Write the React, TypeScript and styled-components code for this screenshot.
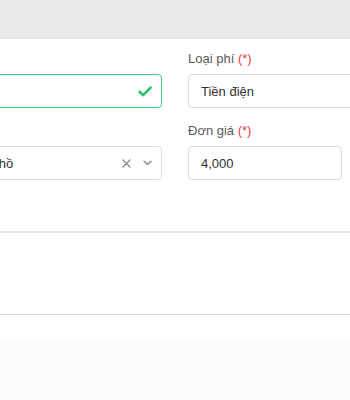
import * as React from 'react';
import styled, { createGlobalStyle } from 'styled-components';

const GlobalStyle = createGlobalStyle`
  html, body {
    margin: 0;
    padding: 0;
    overflow: hidden;
    background: #ffffff;
  }
  body {
    font-family: "Liberation Sans", Arial, sans-serif;
  }
`;

const Page = styled.div`
  width: 350px;
  height: 400px;
  display: flex;
  flex-direction: column;
  overflow: hidden;
`;

const TopBar = styled.div`
  height: 39px;
  flex-shrink: 0;
  background: #e9e9eb;
`;

const Form = styled.div`
  display: flex;
  flex-direction: column;
  gap: 13px;
  margin-left: -80px;
  padding-top: 10px;
`;

const Row = styled.div`
  display: flex;
  gap: 26px;
`;

const Field = styled.div<{ $width: number }>`
  width: ${({ $width }) => $width}px;
  flex-shrink: 0;
  display: flex;
  flex-direction: column;
  gap: 5px;
`;

const Label = styled.label`
  height: 20px;
  line-height: 20px;
  font-size: 13px;
  color: #595959;
  white-space: nowrap;
`;

const Required = styled.span`
  color: #ef3b3b;
`;

const InputBox = styled.div<{ $valid?: boolean }>`
  height: 34px;
  box-sizing: border-box;
  border: 1px solid ${({ $valid }) => ($valid ? '#46c77a' : '#dcdce1')};
  border-radius: 4px;
  display: flex;
  align-items: center;
  padding: 0 9px 0 12px;
  font-size: 13px;
  color: #333333;
  background: #fff;
`;

const Value = styled.span`
  flex: 1;
  white-space: nowrap;
  overflow: hidden;
`;

const Icons = styled.span`
  display: flex;
  align-items: center;
  gap: 12px;
  color: #8a8a8f;
`;

const Divider = styled.div<{ $color: string; $size: number }>`
  height: ${({ $size }) => $size}px;
  background: ${({ $color }) => $color};
  flex-shrink: 0;
`;

const Gap = styled.div<{ $h: number }>`
  height: ${({ $h }) => $h}px;
  flex-shrink: 0;
`;

const Footer = styled.div`
  flex: 1;
  background: #fcfcfd;
`;

const Check = () => (
  <svg width="14" height="11" viewBox="0 0 14 11">
    <path d="M1.5 5.8 L5.2 9.2 L12.6 1.6" fill="none" stroke="#2fbf66" strokeWidth="2.6" strokeLinecap="round" strokeLinejoin="round" />
  </svg>
);

const Cross = () => (
  <svg width="9" height="9" viewBox="0 0 9 9">
    <path d="M1 1 L8 8 M8 1 L1 8" stroke="#8a8a8f" strokeWidth="1.4" strokeLinecap="round" />
  </svg>
);

const Chevron = () => (
  <svg width="9" height="6" viewBox="0 0 9 6">
    <path d="M1 1.2 L4.5 4.6 L8 1.2" fill="none" stroke="#8a8a8f" strokeWidth="1.4" strokeLinecap="round" strokeLinejoin="round" />
  </svg>
);

const App: React.FunctionComponent = () => {
  return (
    <Page>
      <GlobalStyle />
      <TopBar />
      <Form>
        <Row>
          <Field $width={242}>
            <Label />
            <InputBox $valid>
              <Value />
              <Icons>
                <Check />
              </Icons>
            </InputBox>
          </Field>
          <Field $width={240}>
            <Label>
              Loại phí <Required>(*)</Required>
            </Label>
            <InputBox>
              <Value>Tiền điện</Value>
            </InputBox>
          </Field>
        </Row>
        <Row>
          <Field $width={242}>
            <Label />
            <InputBox>
              <Value>Theo đồng hồ</Value>
              <Icons>
                <Cross />
                <Chevron />
              </Icons>
            </InputBox>
          </Field>
          <Field $width={154}>
            <Label>
              Đơn giá <Required>(*)</Required>
            </Label>
            <InputBox>
              <Value>4,000</Value>
            </InputBox>
          </Field>
        </Row>
      </Form>
      <Gap $h={51} />
      <Divider $color="#e7e7eb" $size={2} />
      <Gap $h={81} />
      <Divider $color="#d9d7df" $size={1} />
      <Gap $h={24} />
      <Footer />
    </Page>
  );
};

export default App;
